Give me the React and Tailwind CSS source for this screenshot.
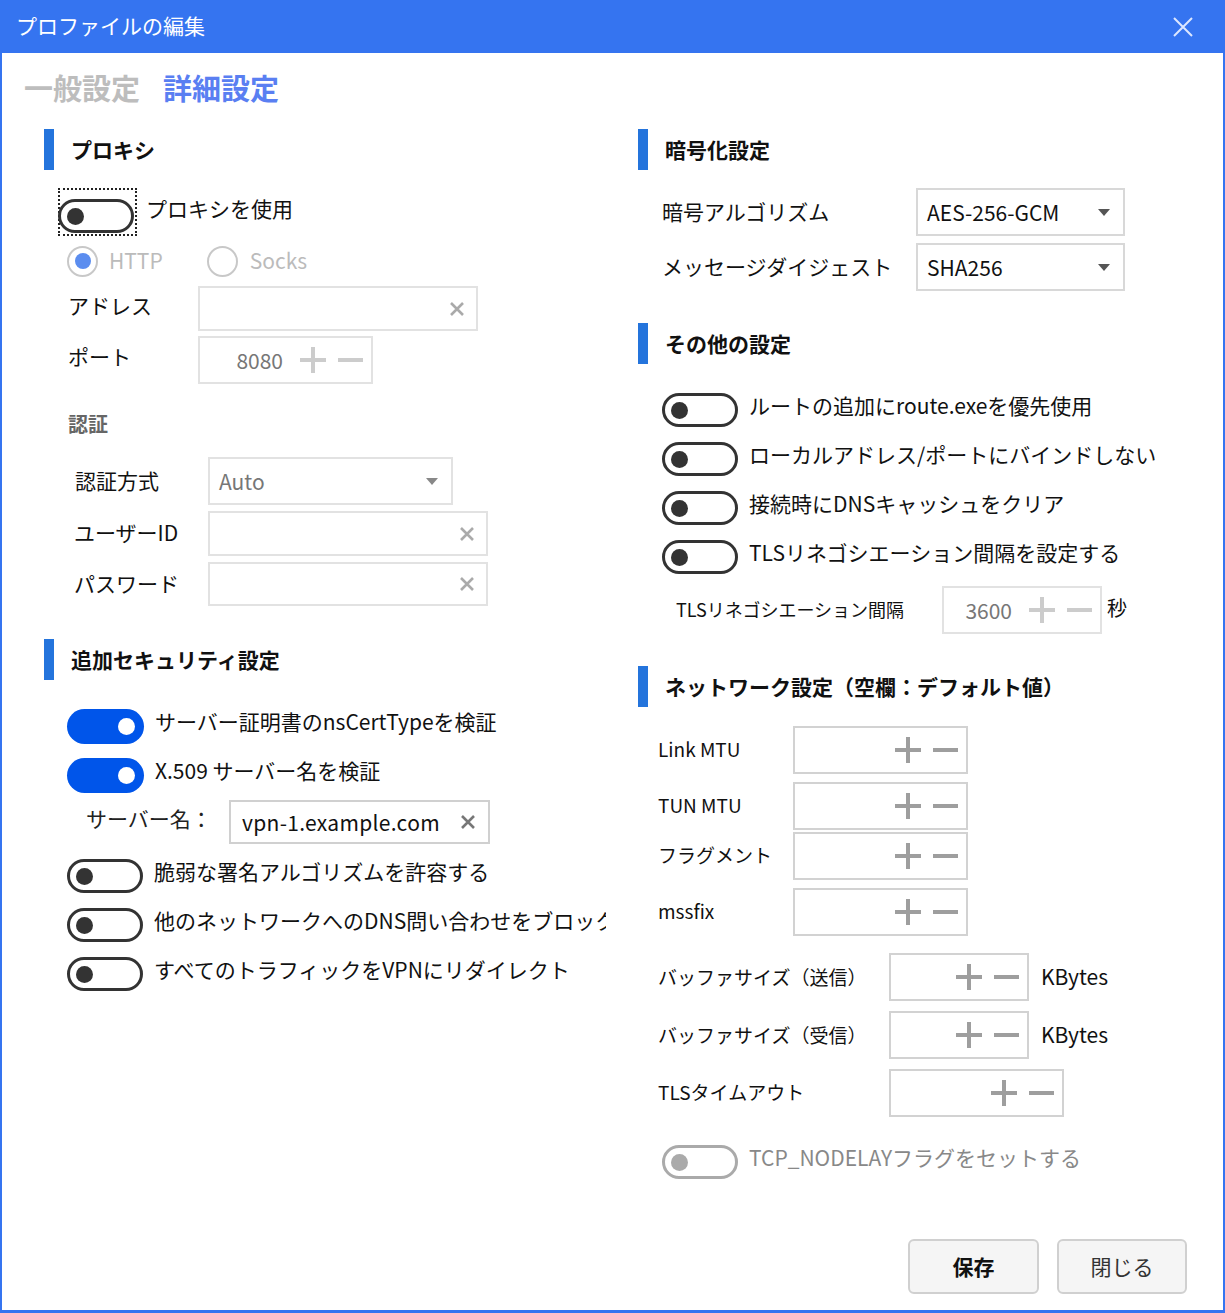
import React from 'react';

const Toggle = ({ on, disabled }) => {
  if (on) {
    return (
      <div className="relative w-[77px] h-[35px] shrink-0 rounded-full bg-[#0055ea]">
        <div className="absolute right-[9px] top-[9px] w-[17px] h-[17px] rounded-full bg-white" />
      </div>
    );
  }
  return (
    <div className={`relative w-[76px] h-[34px] shrink-0 rounded-full border-[3px] ${disabled ? 'border-[#aaaaaa]' : 'border-[#333333]'}`}>
      <div className={`absolute left-[6px] top-[5.5px] w-[17px] h-[17px] rounded-full ${disabled ? 'bg-[#aaaaaa]' : 'bg-[#333333]'}`} />
    </div>
  );
};

const Plus = ({ color }) => (
  <svg width="26" height="26" viewBox="0 0 26 26">
    <path d="M13 0V26M0 13H26" stroke={color} strokeWidth="4" />
  </svg>
);

const Minus = ({ color }) => (
  <svg width="25" height="4" viewBox="0 0 25 4">
    <path d="M0 2H25" stroke={color} strokeWidth="4" />
  </svg>
);

const Clear = ({ color = '#aaaaaa' }) => (
  <svg width="14" height="14" viewBox="0 0 14 14">
    <path d="M1 1L13 13M13 1L1 13" stroke={color} strokeWidth="2.6" />
  </svg>
);

const Caret = ({ color = '#555555' }) => (
  <svg width="12" height="7" viewBox="0 0 12 7">
    <path d="M0 0H12L6 7Z" fill={color} />
  </svg>
);

const SectionHeader = ({ children, className = '' }) => (
  <div className={`flex items-center h-[41px] ${className}`}>
    <div className="w-[10px] h-[41px] bg-[#2474dc]" />
    <span className="ml-[17px] text-[21px] font-bold text-[#111] leading-none">{children}</span>
  </div>
);

const TextBox = ({ w, h, value, clearColor, className = '' }) => (
  <div className={`flex items-center border-2 border-[#e2e2e2] ${className}`} style={{ width: w, height: h }}>
    <span className="flex-1 pl-[10px] text-[21px] text-[#111] leading-none whitespace-nowrap">{value}</span>
    <span className="pr-[12px] flex items-center"><Clear color={clearColor} /></span>
  </div>
);

const NumBox = ({ w, value, dim, className = '' }) => {
  const c = dim ? '#cccccc' : '#9e9e9e';
  return (
    <div className={`flex items-center h-[48px] border-2 ${dim ? 'border-[#e2e2e2]' : 'border-[#d2d2d2]'} ${className}`} style={{ width: w }}>
      <span className="flex-1 text-right pr-[17px] text-[21px] text-[#777] leading-none">{value}</span>
      <div className="flex items-center gap-[12px] pr-[8px]">
        <Plus color={c} />
        <Minus color={c} />
      </div>
    </div>
  );
};

const SelectBox = ({ w, value, dim, className = '' }) => (
  <div className={`flex items-center h-[48px] border-2 ${dim ? 'border-[#e2e2e2]' : 'border-[#d8d8d8]'} ${className}`} style={{ width: w }}>
    <span className={`flex-1 pl-[9px] text-[21px] leading-none ${dim ? 'text-[#777]' : 'text-[#111]'}`}>{value}</span>
    <span className="pr-[13px] flex items-center"><Caret color={dim ? '#888888' : '#555555'} /></span>
  </div>
);

const ToggleRow = ({ on, disabled, label, className = '', ml = 'ml-[23px]' }) => (
  <div className={`flex items-center ${ml} ${className}`}>
    <Toggle on={on} disabled={disabled} />
    <span className={`ml-[11px] mb-[10px] text-[21px] leading-none whitespace-nowrap ${disabled ? 'text-[#888]' : 'text-[#111]'}`}>{label}</span>
  </div>
);

export default function App() {
  return (
    <div className="w-[1225px] h-[1313px] flex flex-col bg-white border-x-2 border-b-[3px] border-[#3574f0] font-['Noto_Sans_CJK_JP',sans-serif] text-[#111] overflow-hidden">
      {/* title bar */}
      <div className="h-[53px] shrink-0 -mx-[2px] bg-[#3574f0] flex items-center justify-between pl-[16px] pr-[32px]">
        <span className="text-[21px] text-white leading-none mb-[2px]">プロファイルの編集</span>
        <svg width="20" height="20" viewBox="0 0 20 20">
          <path d="M1 1L19 19M19 1L1 19" stroke="#dce7ff" strokeWidth="2" />
        </svg>
      </div>

      {/* tabs */}
      <div className="flex items-center gap-[23px] pl-[22px] mt-[14px] h-[40px]">
        <span className="text-[29px] font-bold text-[#bdbdbd] leading-none">一般設定</span>
        <span className="text-[29px] font-bold text-[#5a7ff2] leading-none">詳細設定</span>
      </div>

      <div className="flex pl-[42px] mt-[22px]">
        {/* left column */}
        <div className="w-[562px] shrink-0 overflow-hidden flex flex-col">
          <SectionHeader>プロキシ</SectionHeader>

          <div className="flex items-center ml-[14px] mt-[18px]">
            <div className="w-[79px] h-[48px] border-2 border-dotted border-[#222] flex items-end pb-[1px]">
              <div className="-ml-[2px]"><Toggle /></div>
            </div>
            <span className="ml-[9px] mb-[8px] text-[21px] leading-none">プロキシを使用</span>
          </div>

          <div className="flex items-center ml-[23px] mt-[9px] h-[32px]">
            <div className="w-[31px] h-[31px] rounded-full border-2 border-[#c8c8c8] flex items-center justify-center">
              <div className="w-[16px] h-[16px] rounded-full bg-[#5b8def]" />
            </div>
            <span className="ml-[11px] mb-[2px] text-[21px] text-[#bbbbbb] leading-none">HTTP</span>
            <div className="ml-[44px] w-[31px] h-[31px] rounded-full border-2 border-[#c8c8c8]" />
            <span className="ml-[12px] mb-[2px] text-[21px] text-[#bbbbbb] leading-none">Socks</span>
          </div>

          <div className="flex items-center ml-[24px] mt-[9px]">
            <span className="w-[130px] text-[21px] leading-none mb-[6px]">アドレス</span>
            <TextBox w={280} h={45} />
          </div>

          <div className="flex items-center ml-[24px] mt-[5px]">
            <span className="w-[130px] text-[21px] leading-none mb-[8px]">ポート</span>
            <NumBox w={175} value="8080" dim />
          </div>

          <div className="ml-[24px] mt-[26px] h-[28px] flex items-center">
            <span className="text-[20px] font-bold text-[#666] leading-none">認証</span>
          </div>

          <div className="flex items-center ml-[31px] mt-[19px]">
            <span className="w-[133px] text-[21px] leading-none mb-[2px]">認証方式</span>
            <SelectBox w={245} value="Auto" dim />
          </div>

          <div className="flex items-center ml-[30px] mt-[6px]">
            <span className="w-[134px] text-[21px] leading-none mb-[2px]">ユーザーID</span>
            <TextBox w={280} h={45} />
          </div>

          <div className="flex items-center ml-[30px] mt-[6px]">
            <span className="w-[134px] text-[21px] leading-none mb-[2px]">パスワード</span>
            <TextBox w={280} h={44} />
          </div>

          <SectionHeader className="mt-[33px]">追加セキュリティ設定</SectionHeader>

          <ToggleRow on label="サーバー証明書のnsCertTypeを検証" className="mt-[29px]" />
          <ToggleRow on label="X.509 サーバー名を検証" className="mt-[14px]" />

          <div className="flex items-center ml-[42px] mt-[7px]">
            <span className="w-[143px] text-[21px] leading-none text-[#222] mb-[8px]">サーバー名：</span>
            <div className="flex items-center w-[261px] h-[44px] border-2 border-[#d0d0d0]">
              <span className="flex-1 pl-[11px] text-[21px] leading-none tracking-[0.3px]">vpn-1.example.com</span>
              <span className="pr-[13px] flex items-center"><Clear color="#777777" /></span>
            </div>
          </div>

          <ToggleRow label="脆弱な署名アルゴリズムを許容する" className="mt-[15px]" />
          <ToggleRow label="他のネットワークへのDNS問い合わせをブロックする" className="mt-[15px]" />
          <ToggleRow label="すべてのトラフィックをVPNにリダイレクト" className="mt-[15px]" />
        </div>

        {/* right column */}
        <div className="ml-[32px] flex-1 flex flex-col">
          <SectionHeader>暗号化設定</SectionHeader>

          <div className="flex items-center ml-[24px] mt-[18px]">
            <span className="w-[254px] text-[21px] leading-none mb-[2px]">暗号アルゴリズム</span>
            <SelectBox w={209} value="AES-256-GCM" />
          </div>
          <div className="flex items-center ml-[24px] mt-[7px]">
            <span className="w-[254px] text-[21px] leading-none mb-[2px]">メッセージダイジェスト</span>
            <SelectBox w={209} value="SHA256" />
          </div>

          <SectionHeader className="mt-[32px]">その他の設定</SectionHeader>

          <ToggleRow ml="ml-[24px]" label="ルートの追加にroute.exeを優先使用" className="mt-[29px]" />
          <ToggleRow ml="ml-[24px]" label="ローカルアドレス/ポートにバインドしない" className="mt-[15px]" />
          <ToggleRow ml="ml-[24px]" label="接続時にDNSキャッシュをクリア" className="mt-[15px]" />
          <ToggleRow ml="ml-[24px]" label="TLSリネゴシエーション間隔を設定する" className="mt-[15px]" />

          <div className="flex items-center ml-[38px] mt-[12px]">
            <span className="w-[266px] text-[18px] leading-none mb-[2px]">TLSリネゴシエーション間隔</span>
            <NumBox w={160} value="3600" dim />
            <span className="ml-[5px] text-[20px] leading-none mb-[4px]">秒</span>
          </div>

          <SectionHeader className="mt-[32px]">ネットワーク設定（空欄：デフォルト値）</SectionHeader>

          <div className="flex items-center ml-[20px] mt-[19px]">
            <span className="w-[135px] text-[19px] leading-none mb-[4px]">Link MTU</span>
            <NumBox w={175} />
          </div>
          <div className="flex items-center ml-[20px] mt-[8px]">
            <span className="w-[135px] text-[19px] leading-none mb-[4px]">TUN MTU</span>
            <NumBox w={175} />
          </div>
          <div className="flex items-center ml-[20px] mt-[2px]">
            <span className="w-[135px] text-[19px] leading-none mb-[4px]">フラグメント</span>
            <NumBox w={175} />
          </div>
          <div className="flex items-center ml-[20px] mt-[8px]">
            <span className="w-[135px] text-[19px] leading-none mb-[4px]">mssfix</span>
            <NumBox w={175} />
          </div>

          <div className="flex items-center ml-[20px] mt-[17px]">
            <span className="w-[231px] text-[19px] leading-none mb-[2px]">バッファサイズ（送信）</span>
            <NumBox w={140} />
            <span className="ml-[12px] text-[21px] leading-none mb-[2px]">KBytes</span>
          </div>
          <div className="flex items-center ml-[20px] mt-[10px]">
            <span className="w-[231px] text-[19px] leading-none mb-[2px]">バッファサイズ（受信）</span>
            <NumBox w={140} />
            <span className="ml-[12px] text-[21px] leading-none mb-[2px]">KBytes</span>
          </div>
          <div className="flex items-center ml-[20px] mt-[10px]">
            <span className="w-[231px] text-[19px] leading-none mb-[4px]">TLSタイムアウト</span>
            <NumBox w={175} />
          </div>

          <ToggleRow ml="ml-[24px]" disabled label="TCP_NODELAYフラグをセットする" className="mt-[28px]" />
        </div>
      </div>

      {/* footer */}
      <div className="mt-auto mb-[16px] flex justify-end gap-[18px] pr-[36px]">
        <button className="w-[131px] h-[55px] rounded-[6px] border-2 border-[#d0d0d0] bg-[#f5f5f5] text-[21px] font-bold text-[#111]">保存</button>
        <button className="w-[130px] h-[55px] rounded-[6px] border-2 border-[#d0d0d0] bg-[#f5f5f5] text-[21px] text-[#333]">閉じる</button>
      </div>
    </div>
  );
}
